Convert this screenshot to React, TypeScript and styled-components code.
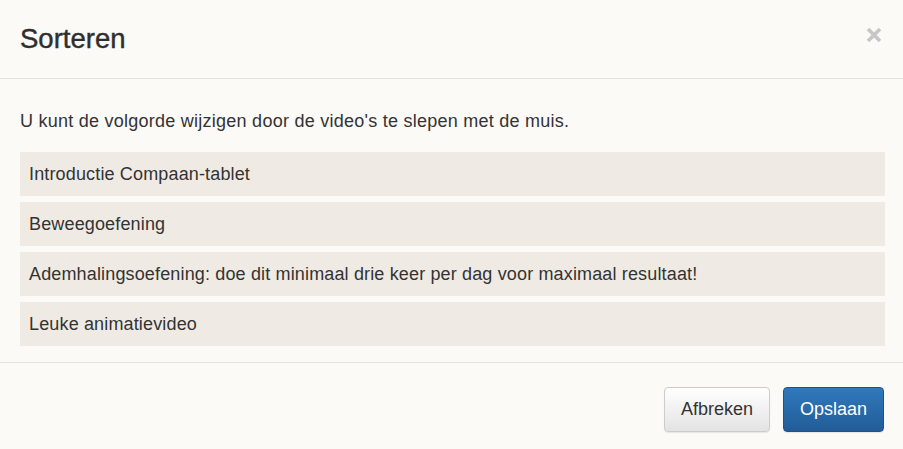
import styled, { createGlobalStyle } from "styled-components";

const GlobalStyle = createGlobalStyle`
  html, body {
    margin: 0;
    padding: 0;
    background: #fbfaf7;
  }
  body {
    font-family: "Liberation Sans", Arial, Helvetica, sans-serif;
    color: #333333;
  }
`;

const videos = [
  "Introductie Compaan-tablet",
  "Beweegoefening",
  "Ademhalingsoefening: doe dit minimaal drie keer per dag voor maximaal resultaat!",
  "Leuke animatievideo",
];

const App = () => {
  return (
    <>
      <GlobalStyle />
      <Modal>
        <Header>
          <Title>Sorteren</Title>
          <CloseButton aria-label="Sluiten">
            <svg width="16" height="16" viewBox="0 0 16 16">
              <path
                d="M2 2 L14 14 M14 2 L2 14"
                stroke="#c6c6c6"
                strokeWidth="3.6"
                strokeLinecap="butt"
              />
            </svg>
          </CloseButton>
        </Header>
        <Body>
          <Intro>
            U kunt de volgorde wijzigen door de video's te slepen met de muis.
          </Intro>
          <List>
            {videos.map((title) => (
              <Item key={title}>{title}</Item>
            ))}
          </List>
        </Body>
        <Footer>
          <Button>Afbreken</Button>
          <Button primary>Opslaan</Button>
        </Footer>
      </Modal>
    </>
  );
};

const Modal = styled.div`
  width: 903px;
  height: 449px;
  background: #fbfaf7;
  display: flex;
  flex-direction: column;
`;

const Header = styled.div`
  height: 79px;
  box-sizing: border-box;
  padding: 0 21px 2px 20px;
  display: flex;
  align-items: center;
  justify-content: space-between;
  border-bottom: 1px solid #e4e3e0;
`;

const Title = styled.h4`
  margin: 0;
  font-size: 27.5px;
  font-weight: 400;
  line-height: 1.2;
  color: #2e2e2e;
  -webkit-text-stroke: 0.4px #2e2e2e;
`;

const CloseButton = styled.button`
  border: 0;
  background: transparent;
  padding: 0;
  margin-top: -6px;
  display: flex;
  cursor: pointer;
`;

const Body = styled.div`
  padding: 31px 18px 16px 20px;
`;

const Intro = styled.p`
  margin: 0 0 20px;
  font-size: 18px;
  line-height: 22px;
  letter-spacing: 0.25px;
  color: #333333;
`;

const List = styled.ul`
  list-style: none;
  margin: 0;
  padding: 0;
  display: flex;
  flex-direction: column;
  gap: 6px;
`;

const Item = styled.li`
  height: 44px;
  display: flex;
  align-items: center;
  padding: 0 9px;
  background: #efebe4;
  font-size: 18px;
  letter-spacing: 0.15px;
  color: #333333;
  cursor: move;
`;

const Footer = styled.div`
  border-top: 1px solid #e4e3e0;
  padding: 24px 19px 0 0;
  display: flex;
  justify-content: flex-end;
  gap: 13px;
`;

const Button = styled.button<{ primary?: boolean }>`
  height: 45px;
  padding: 0 16px;
  border-radius: 4px;
  font-family: "Liberation Sans", Arial, sans-serif;
  font-size: 18px;
  cursor: pointer;
  border: 1px solid ${(p) => (p.primary ? "#1f528a" : "#cccccc")};
  color: ${(p) => (p.primary ? "#ffffff" : "#333333")};
  background: ${(p) =>
    p.primary
      ? "linear-gradient(to bottom, #3079bb 0%, #225c98 100%)"
      : "linear-gradient(to bottom, #ffffff 0%, #e3e3e3 100%)"};
  box-shadow: 0 1px 1px rgba(0, 0, 0, 0.08);
`;

export default App;
